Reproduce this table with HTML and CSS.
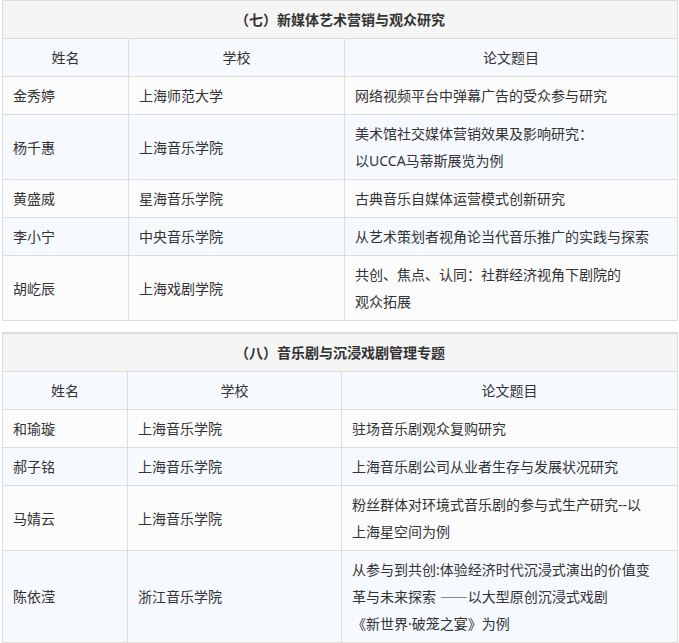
FILE: index.html
```html
<!DOCTYPE html>
<html lang="zh-CN">
<head>
<meta charset="utf-8">
<link rel="stylesheet" href="styles.css">
</head>
<body>
<div class="page">
  <table class="thesis t1">
    <colgroup><col class="c-name"><col class="c-school"><col class="c-title"></colgroup>
    <thead>
      <tr class="cap"><th colspan="3">（七）新媒体艺术营销与观众研究</th></tr>
      <tr class="head"><th>姓名</th><th>学校</th><th>论文题目</th></tr>
    </thead>
    <tbody>
      <tr><td>金秀婷</td><td>上海师范大学</td><td>网络视频平台中弹幕广告的受众参与研究</td></tr>
      <tr><td>杨千惠</td><td>上海音乐学院</td><td>美术馆社交媒体营销效果及影响研究：<br>以UCCA马蒂斯展览为例</td></tr>
      <tr><td>黄盛威</td><td>星海音乐学院</td><td>古典音乐自媒体运营模式创新研究</td></tr>
      <tr><td>李小宁</td><td>中央音乐学院</td><td>从艺术策划者视角论当代音乐推广的实践与探索</td></tr>
      <tr><td>胡屹辰</td><td>上海戏剧学院</td><td>共创、焦点、认同：社群经济视角下剧院的<br>观众拓展</td></tr>
    </tbody>
  </table>
  <table class="thesis t2">
    <colgroup><col class="c-name"><col class="c-school"><col class="c-title"></colgroup>
    <thead>
      <tr class="cap"><th colspan="3">（八）音乐剧与沉浸戏剧管理专题</th></tr>
      <tr class="head"><th>姓名</th><th>学校</th><th>论文题目</th></tr>
    </thead>
    <tbody>
      <tr><td>和瑜璇</td><td>上海音乐学院</td><td>驻场音乐剧观众复购研究</td></tr>
      <tr><td>郝子铭</td><td>上海音乐学院</td><td>上海音乐剧公司从业者生存与发展状况研究</td></tr>
      <tr><td>马婧云</td><td>上海音乐学院</td><td>粉丝群体对环境式音乐剧的参与式生产研究--以<br>上海星空间为例</td></tr>
      <tr><td>陈依滢</td><td>浙江音乐学院</td><td>从参与到共创:体验经济时代沉浸式演出的价值变<br>革与未来探索 <span class="cjk">——</span>以大型原创沉浸式戏剧<br>《新世界·破笼之宴》为例</td></tr>
    </tbody>
  </table>
</div>
</body>
</html>
```
FILE: styles.css
```css
html, body {
  margin: 0;
  padding: 0;
  background: #ffffff;
}
.page {
  padding: 0 2px;
  font-family: "Noto Sans", "Noto Sans CJK SC", sans-serif;
  font-size: 14px;
  color: #333333;
}
.cjk {
  font-family: "Noto Sans CJK SC", sans-serif;
}
.thesis {
  width: 676px;
  border-collapse: collapse;
  table-layout: fixed;
  border: 1px solid #dddddd;
}
.t1 { margin: 0 0 11px 0; }
.t2 { border-top: 2px solid #dcdcdc; }
.t1 .c-name { width: 126px; }
.t1 .c-school { width: 216px; }
.t2 .c-name { width: 125px; }
.t2 .c-school { width: 214px; }
.thesis th, .thesis td {
  border: 1px solid #dddddd;
  padding: 5px 10px 5px 10px;
  line-height: 27px;
  vertical-align: middle;
}
.thesis td {
  text-align: left;
}
.cap th {
  background: #f5f5f5;
  font-weight: bold;
  text-align: center;
  height: 26px;
}
.head th {
  background: #f6f9fe;
  font-weight: normal;
  text-align: center;
}
.thesis tbody tr:nth-child(odd) td { background: #fcfcfd; }
.thesis tbody tr:nth-child(even) td { background: #f6f9fe; }
```
